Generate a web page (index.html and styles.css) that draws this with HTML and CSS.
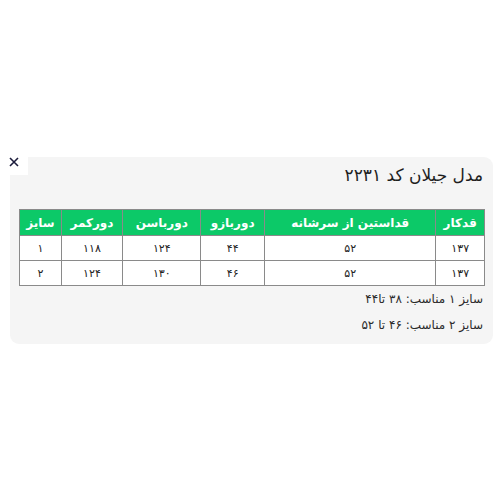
FILE: index.html
```html
<!DOCTYPE html>
<html lang="fa">
<head>
<meta charset="utf-8">
<link rel="stylesheet" href="styles.css">
</head>
<body>
<div class="wrap">
  <div class="card" dir="rtl">
    <button class="close" aria-label="close">
      <svg width="10" height="10" viewBox="0 0 10 10"><path d="M1 1L9 9M9 1L1 9" stroke="#1c1c3c" stroke-width="1.6" fill="none"/></svg>
    </button>
    <h2 class="title">مدل جیلان کد ۲۲۳۱</h2>
    <table class="sizes">
      <thead>
        <tr><th class="c1">قدکار</th><th class="c2">قداستین از سرشانه</th><th class="c3">دوربازو</th><th class="c4">دورباسن</th><th class="c5">دورکمر</th><th class="c6">سایز</th></tr>
      </thead>
      <tbody>
        <tr><td>۱۳۷</td><td>۵۲</td><td>۴۴</td><td>۱۲۴</td><td>۱۱۸</td><td>۱</td></tr>
        <tr><td>۱۳۷</td><td>۵۲</td><td>۴۶</td><td>۱۳۰</td><td>۱۲۴</td><td>۲</td></tr>
      </tbody>
    </table>
    <p class="note">سایز ۱ مناسب: ۳۸ تا۴۴</p>
    <p class="note">سایز ۲ مناسب: ۴۶ تا ۵۲</p>
  </div>
</div>
</body>
</html>
```
FILE: styles.css
```css
html, body {
  margin: 0;
  padding: 0;
  background: #ffffff;
  font-family: "DejaVu Sans", "Noto Sans", sans-serif;
}
.wrap {
  padding: 157px 7px 0 10px;
}
.card {
  position: relative;
  background: #f5f5f5;
  border-radius: 9px;
  padding: 5px 8px 6px 8px;
}
.close {
  position: absolute;
  left: -10px;
  top: -2px;
  width: 28px;
  height: 20px;
  background: #ffffff;
  border: none;
  padding: 0;
  display: flex;
  align-items: flex-start;
  justify-content: center;
  padding-top: 2px;
}
.title {
  margin: 0 2px 0 0;
  font-size: 17px;
  line-height: 26px;
  font-weight: normal;
  color: #1e1e1e;
}
.sizes {
  margin-top: 21px;
  width: 466px;
  margin-left: 0;
  border-collapse: collapse;
  background: #ffffff;
  font-size: 11px;
}
.sizes th, .sizes td {
  border: 1.5px solid #8a8a8a;
  text-align: center;
  padding: 0;
}
.sizes th {
  background: #0cc968;
  color: #ffffff;
  font-weight: bold;
  font-size: 12px;
  height: 25px;
}
.sizes td {
  height: 24px;
  color: #222222;
  font-weight: normal;
}
.c1 { width: 48px; }
.c2 { width: 174px; }
.c3 { width: 63px; }
.c4 { width: 78px; }
.c5 { width: 61px; }
.c6 { width: 41px; }
.note {
  margin: 0;
  font-size: 12px;
  line-height: 26px;
  color: #2a2a2a;
  padding-right: 2px;
}
```
